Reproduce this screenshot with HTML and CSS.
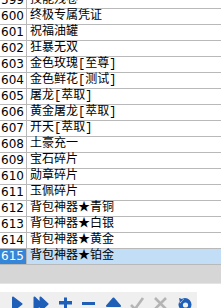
FILE: index.html
```html
<!DOCTYPE html>
<html>
<head>
<meta charset="utf-8">
<link rel="stylesheet" href="styles.css">
</head>
<body>
<div class="grid">
  <div class="row"><div class="num">599</div><div class="name">技能残卷</div></div>
  <div class="row"><div class="num">600</div><div class="name">终极专属凭证</div></div>
  <div class="row"><div class="num">601</div><div class="name">祝福油罐</div></div>
  <div class="row"><div class="num">602</div><div class="name">狂暴无双</div></div>
  <div class="row"><div class="num">603</div><div class="name">金色玫瑰[至尊]</div></div>
  <div class="row"><div class="num">604</div><div class="name">金色鲜花[测试]</div></div>
  <div class="row"><div class="num">605</div><div class="name">屠龙[萃取]</div></div>
  <div class="row"><div class="num">606</div><div class="name">黄金屠龙[萃取]</div></div>
  <div class="row"><div class="num">607</div><div class="name">开天[萃取]</div></div>
  <div class="row"><div class="num">608</div><div class="name">土豪充一</div></div>
  <div class="row"><div class="num">609</div><div class="name">宝石碎片</div></div>
  <div class="row"><div class="num">610</div><div class="name">勋章碎片</div></div>
  <div class="row"><div class="num">611</div><div class="name">玉佩碎片</div></div>
  <div class="row"><div class="num">612</div><div class="name">背包神器★青铜</div></div>
  <div class="row"><div class="num">613</div><div class="name">背包神器★白银</div></div>
  <div class="row"><div class="num">614</div><div class="name">背包神器★黄金</div></div>
  <div class="row sel"><div class="num">615</div><div class="name">背包神器★铂金</div></div>
</div>
<div class="band"></div>
<div class="gap"></div>
<div class="nav">
  <div class="btn"><svg width="16" height="16" viewBox="0 0 16 16"><path class="blue" d="M4 1.5 L12.5 8 L4 14.5 Z"/></svg></div>
  <div class="btn"><svg width="16" height="16" viewBox="0 0 16 16"><path class="blue" d="M1.5 1.5 L8 8 L1.5 14.5 Z M7.5 1.5 L14.5 8 L7.5 14.5 Z"/></svg></div>
  <div class="btn"><svg width="16" height="16" viewBox="0 0 16 16"><path class="fill" d="M7 1.5 H10 V5 H15 V8.5 H10 V14 H7 V8.5 H2 V5 H7 Z"/></svg></div>
  <div class="btn"><svg width="16" height="16" viewBox="0 0 16 16"><rect class="fill" x="1" y="6" width="13" height="3"/></svg></div>
  <div class="btn"><svg width="16" height="16" viewBox="0 0 16 16"><path class="blue" d="M8.5 2.5 L15 10 L2 10 Z"/></svg></div>
  <div class="btn"><svg width="16" height="16" viewBox="0 0 16 16"><path class="grey" d="M2 9 L6 13 L14 2"/></svg></div>
  <div class="btn"><svg width="16" height="16" viewBox="0 0 16 16"><path class="grey" d="M2 2 L13 13 M13 2 L2 13"/></svg></div>
  <div class="btn"><svg width="16" height="16" viewBox="0 0 16 16"><circle class="fill" cx="8" cy="8.5" r="6.5"/><circle cx="8.5" cy="9" r="2.6" fill="#efefef"/><path d="M1 2 L7 3 L3 7.5 Z" fill="#efefef"/><path class="fill" d="M2 2 L6.5 3.5 L3 6.5 Z"/></svg></div>
</div>
</body>
</html>
```
FILE: styles.css
```css
html, body {
  margin: 0;
  padding: 0;
  background: #ffffff;
  width: 221px;
  height: 308px;
  overflow: hidden;
}
.grid {
  margin-top: -7px;
  display: flex;
  flex-direction: column;
}
.row {
  display: flex;
  height: 15px;
  border-bottom: 1px solid #b9b9b9;
}
.num {
  width: 27px;
  box-sizing: border-box;
  border-right: 1px solid #b9b9b9;
  padding-right: 2px;
  text-align: right;
  font-family: "DejaVu Sans", sans-serif;
  font-size: 12px;
  line-height: 15px;
  color: #000;
}
.name {
  flex: 1;
  padding-left: 3px;
  font-family: "Liberation Mono", "Noto Sans CJK SC", monospace;
  font-size: 12px;
  line-height: 15px;
  color: #000;
  white-space: nowrap;
}
.sel .num {
  background: #3585d8;
  color: #ffffff;
}
.sel .name {
  background: #c2def6;
}
.band {
  height: 18px;
  background: #d6d6d6;
  border-bottom: 1px solid #e4e4e4;
}
.gap {
  height: 8px;
}
.nav {
  width: 192px;
  padding-left: 5px;
  height: 30px;
  background: #efefef;
  display: flex;
}
.btn {
  width: 24px;
  padding-top: 4px;
  display: flex;
  justify-content: center;
  align-items: flex-start;
}
.blue {
  fill: #1f5fb8;
  stroke: #1f5fb8;
  stroke-width: 2;
  stroke-linejoin: round;
}
.fill {
  fill: #1f5fb8;
}
.grey {
  fill: none;
  stroke: #b4b4b4;
  stroke-width: 2.6;
}
```
